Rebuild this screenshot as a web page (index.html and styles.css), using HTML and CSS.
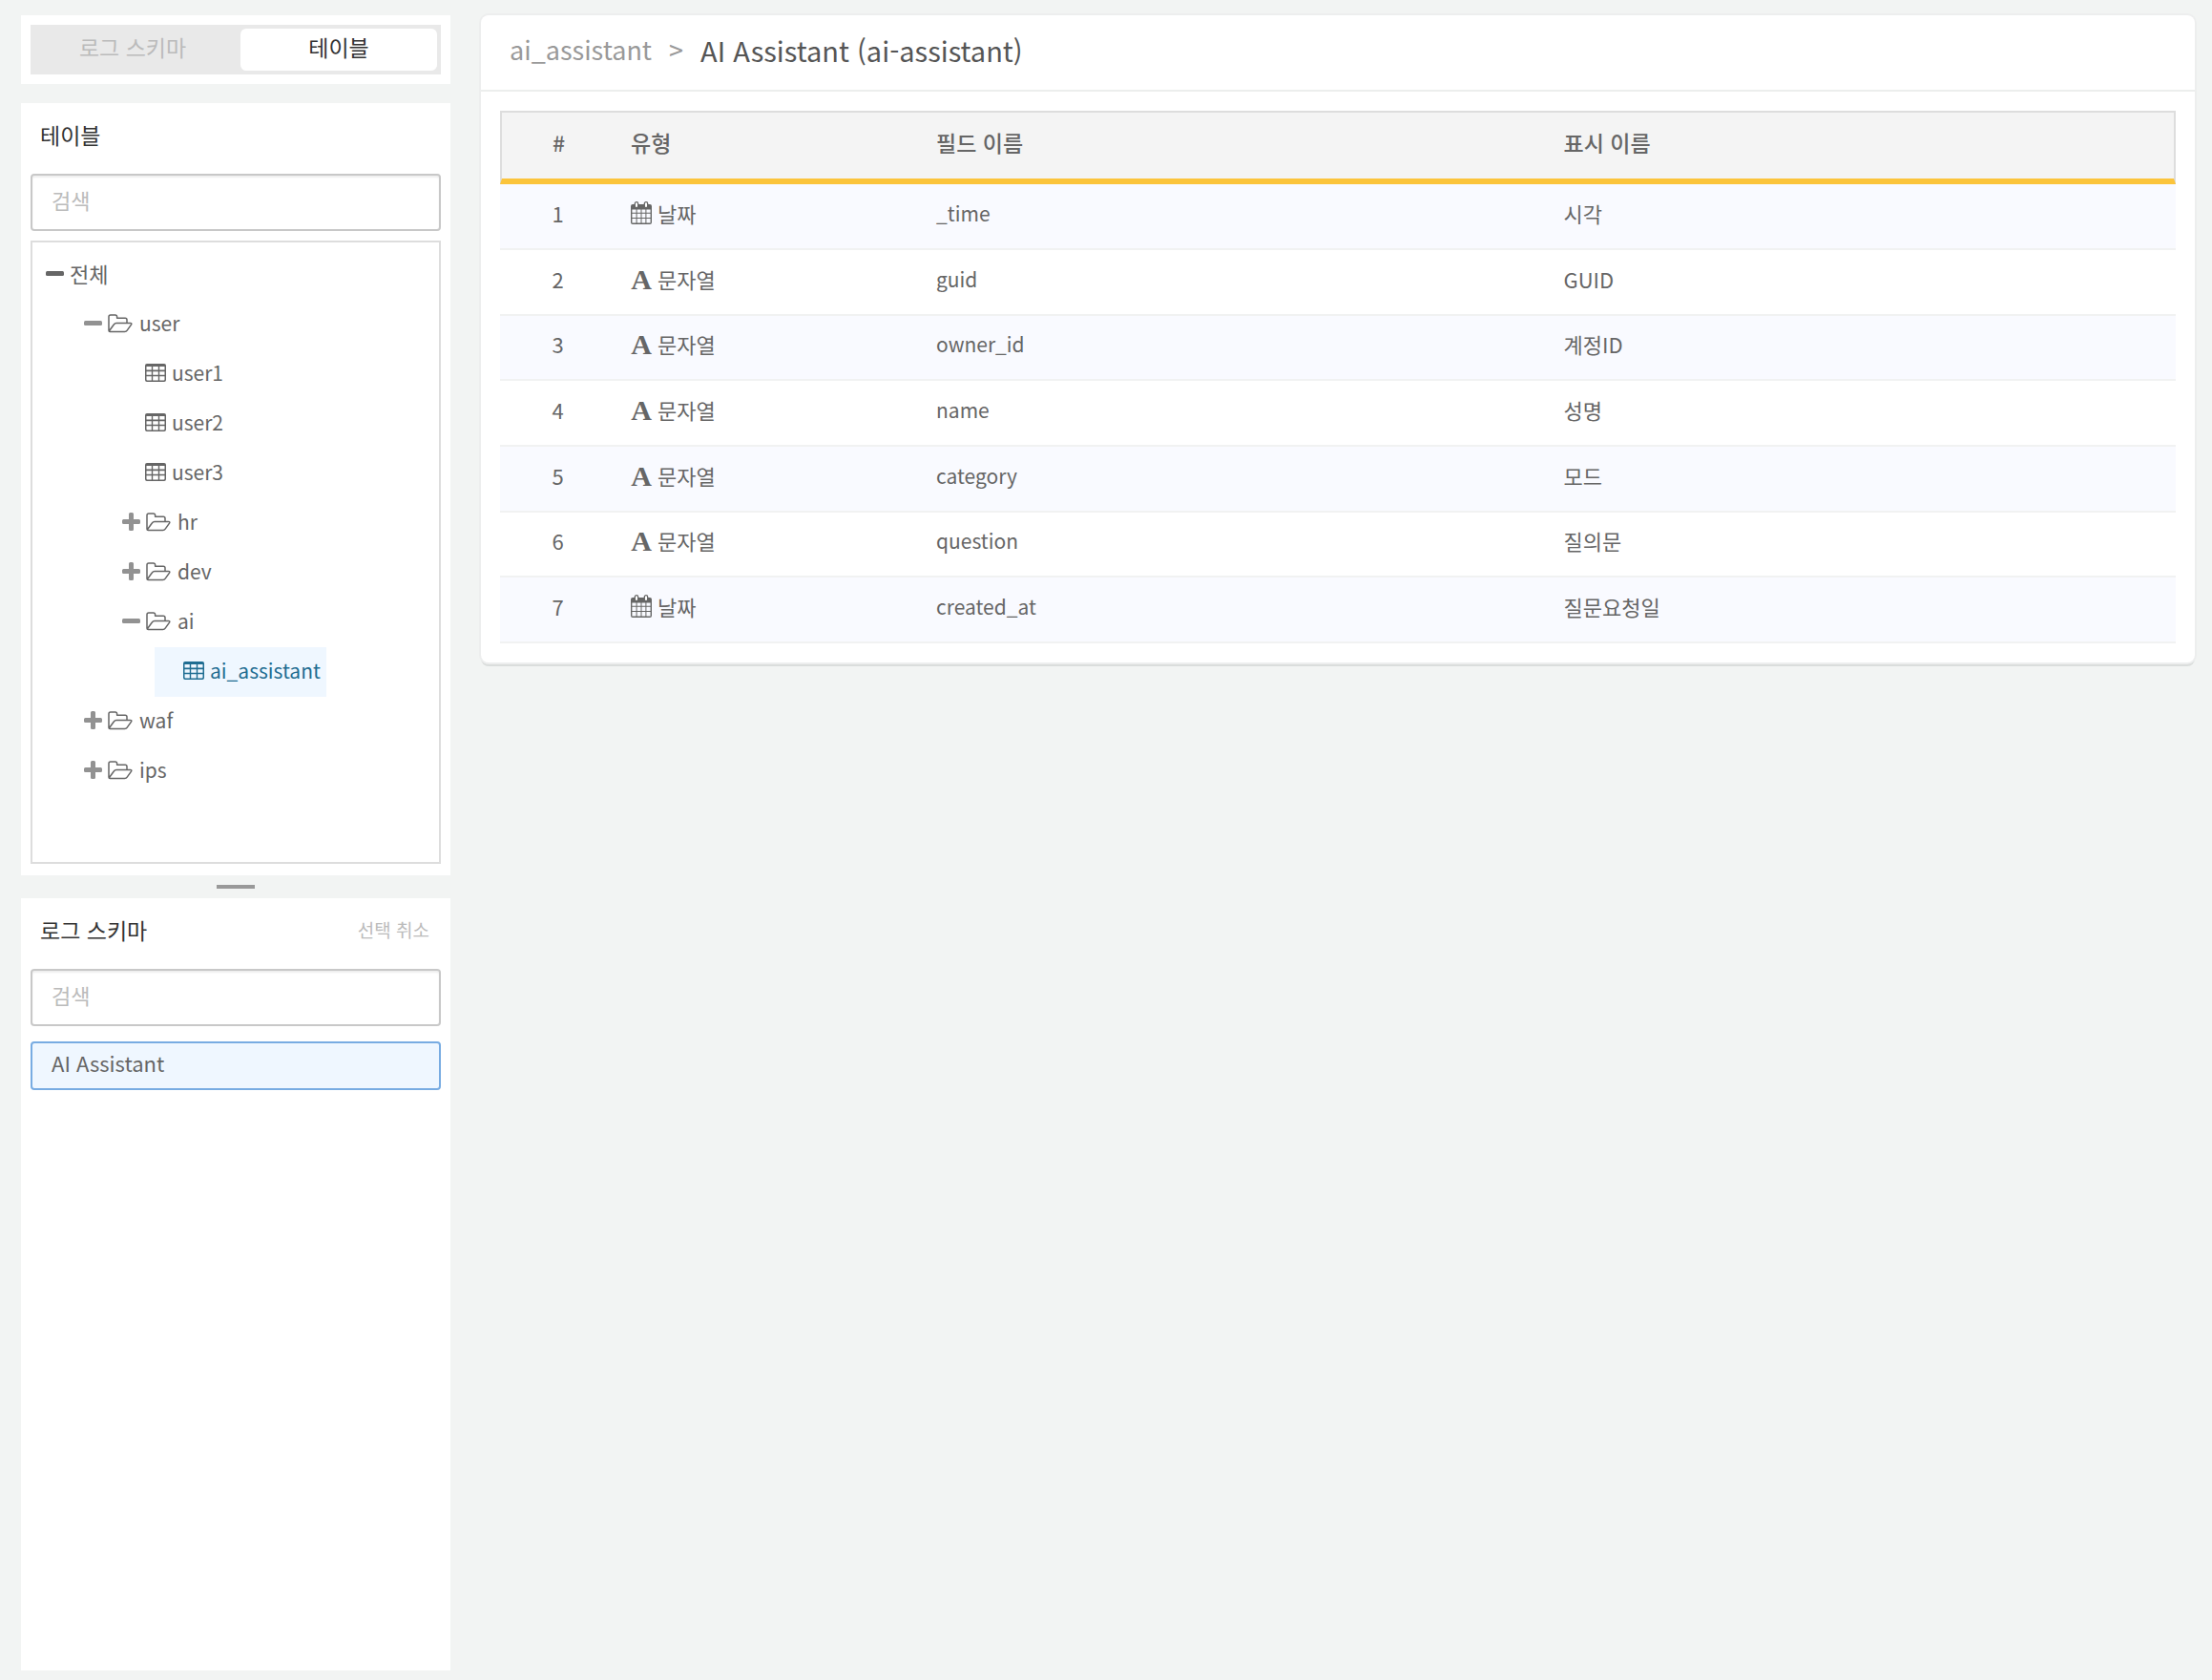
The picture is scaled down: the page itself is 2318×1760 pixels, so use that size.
FILE: index.html
```
<!DOCTYPE html>
<html lang="ko">
<head>
    <meta charset="utf-8">
    <meta name="viewport" content="width=device-width, initial-scale=1">
    <title>AI Assistant (ai-assistant)</title>
    <link rel="stylesheet" href="styles.css">
</head>
<body>
    <!-- icon sprites -->
    <svg class="sprites" aria-hidden="true">
        <symbol id="icon-minus" viewBox="0 0 20 20">
            <rect x="0" y="7" width="19" height="5" rx="1.5"/>
        </symbol>
        <symbol id="icon-plus" viewBox="0 0 20 20">
            <path d="M8.500 0h2a1.500 1.500 0 0 1 1.500 1.500V7h5.500A1.500 1.500 0 0 1 19 8.500v2a1.500 1.500 0 0 1-1.500 1.500H12v5.500a1.500 1.500 0 0 1-1.500 1.500h-2A1.500 1.500 0 0 1 7 17.500V12H1.500A1.500 1.500 0 0 1 0 10.500v-2A1.500 1.500 0 0 1 1.500 7H7V1.500A1.500 1.500 0 0 1 8.500 0z"/>
        </symbol>
        <symbol id="icon-folder" viewBox="0 0 26 20">
            <path d="M1 17.500V2.800Q1 1 2.800 1h5Q9.600 1 9.600 2.800v1.400h8.600q1.800 0 1.800 1.800v3.500M1.200 18l5.300-7.200q.9-1.300 2.400-1.300h14.600q2 0 1 1.600l-4.300 6q-.9 1.400-2.500 1.400H2.300Q1 18.500 1 17" fill="none" stroke="currentColor" stroke-width="1.500" stroke-linejoin="round"/>
        </symbol>
        <symbol id="icon-table" viewBox="0 0 22 20">
            <path fill-rule="evenodd" d="M2 0h18a2 2 0 0 1 2 2v15a2 2 0 0 1-2 2H2a2 2 0 0 1-2-2V2a2 2 0 0 1 2-2zM1.500 3v3.600h5.300V3zM8.200 3v3.600h5.600V3zM15.200 3v3.600h5.300V3zM1.500 8.200v3.600h5.300V8.200zM8.200 8.200v3.600h5.600V8.200zM15.200 8.200v3.600h5.300V8.200zM1.500 13.300v3.200q0 1 1 1h4.300v-4.200zM8.200 13.300v4.200h5.600v-4.200zM15.200 13.300v4.200h4.300q1 0 1-1v-3.200z"/>
        </symbol>
        <symbol id="icon-calendar" viewBox="0 0 22 24">
            <path fill-rule="evenodd" d="M2 3h18a2 2 0 0 1 2 2v17a2 2 0 0 1-2 2H2a2 2 0 0 1-2-2V5a2 2 0 0 1 2-2zM1.400 8.500v3.300h4.200V8.500zM6.600 8.500v3.300h3.900V8.500zM11.500 8.500v3.300h3.900V8.500zM16.400 8.500v3.300h4.200V8.500zM1.400 12.800v4.200h4.200v-4.200zM6.600 12.800v4.200h3.900v-4.200zM11.500 12.800v4.200h3.900v-4.200zM16.400 12.800v4.200h4.200v-4.200zM1.400 18v4.600h4.200V18zM6.600 18v4.600h3.900V18zM11.500 18v4.600h3.900V18zM16.400 18v4.600h4.200V18z"/>
            <rect x="4.300" y=".7" width="3.400" height="6" rx="1.700" fill="#fff" stroke="currentColor" stroke-width="1.300"/>
            <rect x="14.300" y=".7" width="3.400" height="6" rx="1.700" fill="#fff" stroke="currentColor" stroke-width="1.300"/>
        </symbol>
    </svg>

    <div class="layout">
        <aside class="sidebar">
            <div class="panel tabs">
                <div class="tab-buttons">
                    <button type="button">로그 스키마</button>
                    <button type="button" class="active">테이블</button>
                </div>
            </div>

            <section class="panel list-panel">
                <div class="panel-head">
                    <h2>테이블</h2>
                </div>
                <input type="text" class="search" placeholder="검색" aria-label="테이블 검색">
                <div class="tree">
                    <div class="node root"><svg class="toggle"><use href="#icon-minus"/></svg><span>전체</span></div>
                    <ul>
                        <li>
                            <div class="node"><svg class="toggle"><use href="#icon-minus"/></svg><svg class="folder"><use href="#icon-folder"/></svg><span>user</span></div>
                            <ul>
                                <li><div class="node leaf"><svg class="table-icon"><use href="#icon-table"/></svg><span>user1</span></div></li>
                                <li><div class="node leaf"><svg class="table-icon"><use href="#icon-table"/></svg><span>user2</span></div></li>
                                <li><div class="node leaf"><svg class="table-icon"><use href="#icon-table"/></svg><span>user3</span></div></li>
                                <li><div class="node"><svg class="toggle"><use href="#icon-plus"/></svg><svg class="folder"><use href="#icon-folder"/></svg><span>hr</span></div></li>
                                <li><div class="node"><svg class="toggle"><use href="#icon-plus"/></svg><svg class="folder"><use href="#icon-folder"/></svg><span>dev</span></div></li>
                                <li>
                                    <div class="node"><svg class="toggle"><use href="#icon-minus"/></svg><svg class="folder"><use href="#icon-folder"/></svg><span>ai</span></div>
                                    <ul>
                                        <li><div class="node leaf selected"><svg class="table-icon"><use href="#icon-table"/></svg><span>ai_assistant</span></div></li>
                                    </ul>
                                </li>
                            </ul>
                        </li>
                        <li><div class="node"><svg class="toggle"><use href="#icon-plus"/></svg><svg class="folder"><use href="#icon-folder"/></svg><span>waf</span></div></li>
                        <li><div class="node"><svg class="toggle"><use href="#icon-plus"/></svg><svg class="folder"><use href="#icon-folder"/></svg><span>ips</span></div></li>
                    </ul>
                </div>
            </section>

            <div class="splitter"></div>

            <section class="panel list-panel">
                <div class="panel-head">
                    <h2>로그 스키마</h2>
                    <button type="button" class="clear">선택 취소</button>
                </div>
                <input type="text" class="search" placeholder="검색" aria-label="로그 스키마 검색">
                <button type="button" class="schema-item">AI Assistant</button>
            </section>
        </aside>

        <main class="content">
            <header class="breadcrumb">
                <a href="#">ai_assistant</a>
                <span class="sep">&gt;</span>
                <h1>AI Assistant (ai-assistant)</h1>
            </header>
            <div class="table-wrap">
                <table>
                    <thead>
                        <tr><th class="num">#</th><th class="type">유형</th><th>필드 이름</th><th>표시 이름</th></tr>
                    </thead>
                    <tbody>
                        <tr><td class="num">1</td><td><span class="kind"><svg class="calendar"><use href="#icon-calendar"/></svg>날짜</span></td><td class="field">_time</td><td>시각</td></tr>
                        <tr><td class="num">2</td><td><span class="kind"><b class="letter">A</b>문자열</span></td><td class="field">guid</td><td>GUID</td></tr>
                        <tr><td class="num">3</td><td><span class="kind"><b class="letter">A</b>문자열</span></td><td class="field">owner_id</td><td>계정ID</td></tr>
                        <tr><td class="num">4</td><td><span class="kind"><b class="letter">A</b>문자열</span></td><td class="field">name</td><td>성명</td></tr>
                        <tr><td class="num">5</td><td><span class="kind"><b class="letter">A</b>문자열</span></td><td class="field">category</td><td>모드</td></tr>
                        <tr><td class="num">6</td><td><span class="kind"><b class="letter">A</b>문자열</span></td><td class="field">question</td><td>질의문</td></tr>
                        <tr><td class="num">7</td><td><span class="kind"><svg class="calendar"><use href="#icon-calendar"/></svg>날짜</span></td><td class="field">created_at</td><td>질문요청일</td></tr>
                    </tbody>
                </table>
            </div>
        </main>
    </div>
</body>
</html>
```

FILE: styles.css
```
:root {
    --clr-bg: #f2f4f3;
    --clr-text: #666;
    --clr-dark: #333;
    --clr-muted: #bbb;
    --clr-line: #ddd;
    --clr-select: #eff7ff;
}
* {
    box-sizing: border-box;
}
body {
    margin: 0;
    background-color: var(--clr-bg);
    color: var(--clr-text);
    font-family: "Noto Sans CJK KR", sans-serif;
    font-size: 22px;
    line-height: 32px;
}
button, input {
    font: inherit;
    color: inherit;
}
button {
    border: none;
    background: none;
    padding: 0;
    cursor: pointer;
}
h1, h2 {
    margin: 0;
    font-weight: 400;
}
ul {
    list-style: none;
    margin: 0;
    padding: 0 0 0 40px;
}
svg {
    flex: none;
    fill: currentColor;
}
.sprites {
    display: none;
}
.layout {
    display: flex;
    align-items: flex-start;
    gap: 32px;
    min-height: 100vh;
    padding: 16px 18px 10px 22px;
}

/* sidebar */
.sidebar {
    flex: none;
    align-self: stretch;
    display: flex;
    flex-direction: column;
    width: 450px;
}
.panel {
    background-color: #fff;
    padding: 10px;
}
.tabs {
    margin-bottom: 20px;
}
.tab-buttons {
    display: flex;
    gap: 10px;
    padding: 4px;
    background-color: #e9e9e9;
}
.tab-buttons button {
    flex: 1;
    height: 44px;
    padding-bottom: 6px;
    border-radius: 6px;
    font-size: 23px;
    color: var(--clr-muted);
}
.tab-buttons button.active {
    background-color: #fff;
    color: var(--clr-dark);
}
.list-panel {
    flex: 1;
    display: flex;
    flex-direction: column;
    padding-top: 0;
}
.panel-head {
    display: flex;
    justify-content: space-between;
    align-items: center;
    height: 74px;
    padding: 0 12px 8px 10px;
}
h2 {
    font-size: 23px;
    color: var(--clr-dark);
}
.clear {
    font-size: 19px;
    color: var(--clr-muted);
}
.search {
    width: 100%;
    height: 60px;
    padding: 0 20px 6px;
    border: 2px solid #c8c8c8;
    border-radius: 4px;
    background-color: #fff;
    box-shadow: inset 0 2px 2px rgba(0, 0, 0, 0.07);
}
.search::placeholder {
    color: var(--clr-muted);
    opacity: 1;
}
.tree {
    flex: 1;
    margin: 10px 0 2px;
    padding: 8px 14px;
    border: 2px solid var(--clr-line);
    font-size: 21px;
}
.root {
    font-size: 22px;
}
.node {
    display: flex;
    align-items: center;
    width: fit-content;
    height: 52px;
    padding-right: 6px;
    padding-bottom: 2px;
}
.node span {
    padding-bottom: 2px;
}
.toggle {
    width: 20px;
    height: 20px;
    margin-right: 5px;
    color: #929292;
}
.root .toggle {
    color: var(--clr-text);
}
.folder {
    width: 26px;
    height: 20px;
    margin-right: 7px;
}
.leaf {
    padding-left: 24px;
}
.leaf.selected {
    margin-left: -6px;
    padding-left: 30px;
    background-color: var(--clr-select);
    color: #1f6d92;
}
.table-icon {
    width: 22px;
    height: 20px;
    margin-right: 6px;
}
.splitter {
    width: 40px;
    height: 4px;
    margin: 10px auto;
    background-color: #999;
}
.schema-item {
    height: 51px;
    margin-top: 16px;
    padding: 0 20px 8px;
    border: 2px solid #78ace2;
    border-radius: 4px;
    background-color: var(--clr-select);
    text-align: left;
}

/* content */
.content {
    flex: 1;
    min-width: 0;
    border-radius: 8px;
    background-color: #fff;
    box-shadow: 0 0 0 2px #edeeee, 0 4px 0 #dadddc;
}
.breadcrumb {
    display: flex;
    align-items: center;
    gap: 18px;
    height: 80px;
    padding: 0 30px 6px;
    border-bottom: 2px solid #eceeed;
    font-size: 27px;
    color: #999;
}
.breadcrumb a {
    color: inherit;
    text-decoration: none;
}
.breadcrumb h1 {
    font-size: 29px;
    color: #555;
}
.table-wrap {
    padding: 20px;
}
table {
    width: 100%;
    table-layout: fixed;
    border-collapse: separate;
    border-spacing: 0;
}
th, td {
    padding: 0 16px 8px;
    text-align: left;
}
th {
    height: 77px;
    border-top: 2px solid var(--clr-line);
    border-bottom: 6px solid #fbc43c;
    background-color: #f4f4f4;
    font-size: 23px;
    font-weight: 500;
}
th:first-child {
    border-left: 2px solid var(--clr-line);
}
th:last-child {
    border-right: 2px solid var(--clr-line);
}
td {
    height: 69px;
    border-bottom: 2px solid #f1f2f2;
}
tbody tr:nth-child(3n) td {
    height: 68px;
}
tbody tr:nth-child(odd) {
    background-color: #f9faff;
}
.num {
    width: 121px;
    text-align: center;
}
.type {
    width: 320px;
}
.field {
    font-size: 21px;
}
.kind {
    display: flex;
    align-items: center;
    gap: 6px;
}
.calendar {
    width: 22px;
    height: 24px;
}
.letter {
    width: 22px;
    padding-top: 2px;
    font-family: "Liberation Serif", serif;
    font-size: 30px;
    text-align: center;
}
```
